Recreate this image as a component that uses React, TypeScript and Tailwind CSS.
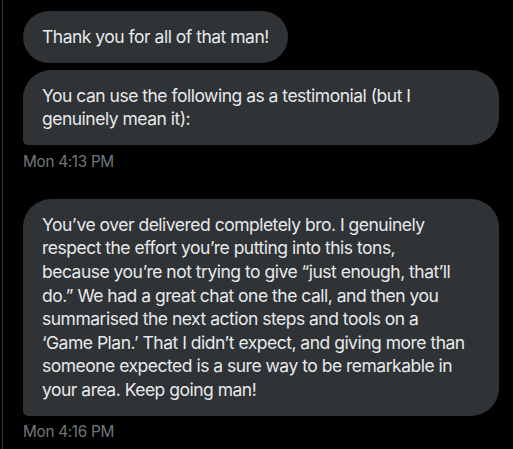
const Bubble = ({ children, className = '' }: { children: React.ReactNode; className?: string }) => (
  <div
    className={`bg-[#2f3336] text-[#e7e9ea] text-[17.5px] leading-[23.6px] tracking-[-0.5px] px-[19px] py-[14px] ${className}`}
  >
    {children}
  </div>
);

const Lines = ({ lines }: { lines: string[] }) => (
  <>
    {lines.map((l) => (
      <span key={l} className="block whitespace-nowrap">
        {l}
      </span>
    ))}
  </>
);

const Stamp = ({ children, className = '' }: { children: React.ReactNode; className?: string }) => (
  <div className={`text-[#71767b] text-[15.3px] leading-[20px] tracking-[-0.3px] ${className}`}>{children}</div>
);

const testimonial = [
  'You’ve over delivered completely bro. I genuinely',
  'respect the effort you’re putting into this tons,',
  'because you’re not trying to give “just enough, that’ll',
  'do.” We had a great chat one the call, and then you',
  'summarised the next action steps and tools on a',
  '‘Game Plan.’ That I didn’t expect, and giving more than',
  'someone expected is a sure way to be remarkable in',
  'your area. Keep going man!',
];

export default function App() {
  return (
    <div
      className="w-[513px] h-[449px] bg-black overflow-hidden"
      style={{ fontFamily: 'Inter, "Noto Sans", sans-serif' }}
    >
      <div className="ml-[2px] h-full border-l border-[#2f3336] pl-[20px] pr-[14px] pt-[11px] flex flex-col items-start">
        <Bubble className="rounded-[28px] w-fit">Thank you for all of that man!</Bubble>
        <Bubble className="mt-[7px] w-full rounded-[28px] rounded-bl-[5px]">
          <Lines lines={['You can use the following as a testimonial (but I', 'genuinely mean it):']} />
        </Bubble>
        <Stamp className="mt-[7px]">Mon 4:13 PM</Stamp>
        <Bubble className="mt-[27px] w-full rounded-[28px] rounded-bl-[5px]">
          <Lines lines={testimonial} />
        </Bubble>
        <Stamp className="mt-[6px]">Mon 4:16 PM</Stamp>
      </div>
    </div>
  );
}
